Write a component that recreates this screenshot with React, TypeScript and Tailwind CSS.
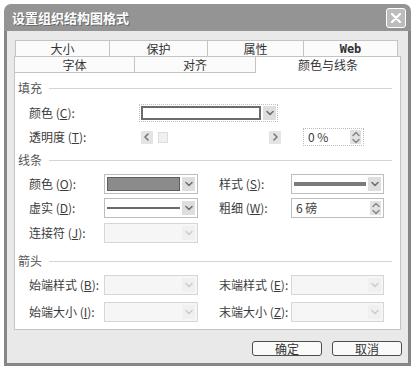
import type { ReactNode } from "react";

function Chevron({ dir = "down", color = "#6b6b6b" }: { dir?: "down" | "up" | "left" | "right"; color?: string }) {
    const d = {
        down: "M1 1.5L4 4.5L7 1.5",
        up: "M1 4.5L4 1.5L7 4.5",
        left: "M5 1L2 4L5 7",
        right: "M3 1L6 4L3 7",
    }[dir];
    const w = dir === "down" || dir === "up" ? 8 : 8;
    const h = dir === "down" || dir === "up" ? 6 : 8;
    return (
        <svg width={w} height={h} viewBox={`0 0 ${w} ${h}`} fill="none" aria-hidden="true">
            <path d={d} stroke={color} strokeWidth="1.6" strokeLinecap="round" strokeLinejoin="round" />
        </svg>
    );
}

function Label({ text, k, className = "" }: { text: string; k: string; className?: string }) {
    return (
        <span className={`shrink-0 text-[12px] leading-none text-[#3c3c3c] ${className}`}>
            {text} (<u>{k}</u>):
        </span>
    );
}

function ArrowBox({ dim }: { dim?: boolean }) {
    return (
        <div
            className={`flex w-[13px] shrink-0 items-center justify-center self-stretch ${
                dim ? "bg-[#f0f0f0]" : "bg-[#dedede]"
            }`}
        >
            <Chevron color={dim ? "#cdcdcd" : "#707070"} />
        </div>
    );
}

function Dropdown({ children, disabled, className = "" }: { children?: ReactNode; disabled?: boolean; className?: string }) {
    return (
        <div
            className={`flex h-[20px] gap-[2px] border p-[2px] ${
                disabled ? "border-[#d6d6d6] bg-[#f6f6f6]" : "border-[#bdbdbd] bg-white"
            } ${className}`}
        >
            <div className="flex flex-1 items-center">{children}</div>
            <ArrowBox dim={disabled} />
        </div>
    );
}

function SpinBox({ value, className = "" }: { value: string; className?: string }) {
    return (
        <div className={`flex h-[20px] items-center border border-[#bdbdbd] bg-white pl-[4px] pr-[2px] ${className}`}>
            <span className="flex-1 text-[12px] leading-none text-[#3c3c3c]">{value}</span>
            <div className="flex h-[14px] w-[11px] flex-col items-center justify-center gap-[1px] bg-[#e2e2e2]">
                <Chevron dir="up" color="#8a8a8a" />
                <Chevron dir="down" color="#8a8a8a" />
            </div>
        </div>
    );
}

function Section({ title, className = "" }: { title: string; className?: string }) {
    return (
        <div className={`flex h-[16px] items-center gap-[7px] pl-[3px] pr-[8px] ${className}`}>
            <span className="text-[12px] leading-none text-[#555]">{title}</span>
            <div className="h-px flex-1 bg-[#d4d4d4]" />
        </div>
    );
}

function Tab({ label, className = "", active }: { label: string; className?: string; active?: boolean }) {
    return (
        <div
            className={`flex items-center justify-center border-x border-t border-[#c4c4c4] text-[12px] leading-none text-[#333] ${
                active ? "bg-white" : "bg-[#fbfbfb]"
            } ${className}`}
        >
            {label}
        </div>
    );
}

export default function App() {
    return (
        <div className="h-[373px] w-[420px] bg-white pl-[4px] pt-[4px] font-['Noto_Sans_CJK_SC',sans-serif]">
            <div className="w-[407px]">
                {/* Title bar */}
                <div className="flex h-[27px] items-center justify-between rounded-t-[7px] bg-[#949494] pl-[8px] pr-[5px]">
                    <span className="text-[13px] font-bold leading-none text-white [text-shadow:1px_1px_0_#6a6a6a]">
                        设置组织结构图格式
                    </span>
                    <div className="flex h-[20px] w-[20px] items-center justify-center rounded-[3px] border border-white bg-[#bcbcbc]">
                        <svg width="10" height="10" viewBox="0 0 10 10" aria-hidden="true">
                            <path d="M1 1L9 9M9 1L1 9" stroke="white" strokeWidth="2.2" strokeLinecap="round" />
                        </svg>
                    </div>
                </div>

                {/* Body */}
                <div className="flex flex-col border-x-[3px] border-b-[3px] border-[#868686] bg-[#e9e9e9] pb-[7px] pt-[9px]">
                    {/* Tab rows */}
                    <div className="ml-[8px] flex h-[16px] w-[383px]">
                        <Tab label="大小" className="w-[95px]" />
                        <Tab label="保护" className="w-[98px] border-l-0" />
                        <Tab label="属性" className="w-[96px] border-l-0" />
                        <Tab label="Web" className="w-[94px] border-l-0 font-['DejaVu_Sans_Mono',monospace] text-[10px] font-bold" />
                    </div>
                    <div className="ml-[7px] flex h-[17px] w-[387px]">
                        <Tab label="字体" className="w-[121px] border-b" />
                        <Tab label="对齐" className="w-[121px] border-b border-l-0" />
                        <Tab label="颜色与线条" active className="flex-1 border-l-0" />
                    </div>

                    {/* Panel */}
                    <div className="ml-[7px] flex w-[387px] flex-col border-x border-b border-[#c4c4c4] bg-white pb-[7px] pt-[7px]">
                        <Section title="填充" />

                        <div className="mt-[8px] flex h-[18px] items-center pl-[14px]">
                            <Label text="颜色" k="C" className="w-[110px]" />
                            <div className="flex h-[18px] w-[139px] gap-[2px] border border-dotted border-[#c0c0c0] p-[1px]">
                                <div className="flex-1 border-[2px] border-[#6c6c6c] bg-white" />
                                <ArrowBox />
                            </div>
                        </div>

                        <div className="mt-[6px] flex h-[18px] items-center pl-[14px]">
                            <Label text="透明度" k="T" className="w-[112px]" />
                            <div className="flex w-[140px] items-center justify-between">
                                <div className="flex items-center gap-[5px]">
                                    <div className="flex h-[13px] w-[12px] items-center justify-center bg-[#e4e4e4]">
                                        <Chevron dir="left" color="#7a7a7a" />
                                    </div>
                                    <div className="h-[11px] w-[10px] border border-[#dcdcdc] bg-[#f0f0f0]" />
                                </div>
                                <div className="flex h-[13px] w-[12px] items-center justify-center bg-[#e4e4e4]">
                                    <Chevron dir="right" color="#7a7a7a" />
                                </div>
                            </div>
                            <SpinBox value="0 %" className="ml-[22px] !h-[18px] w-[61px] border-dotted" />
                        </div>

                        <Section title="线条" className="mt-[6px]" />

                        <div className="mt-[6px] flex h-[20px] items-center pl-[14px]">
                            <Label text="颜色" k="O" className="w-[75px]" />
                            <Dropdown className="w-[94px]">
                                <div className="h-full w-full border border-[#5e5e5e] bg-[#8b8b8b]" />
                            </Dropdown>
                            <Label text="样式" k="S" className="ml-[21px] w-[72px]" />
                            <Dropdown className="w-[93px]">
                                <div className="h-[4px] w-full bg-[#7a7a7a]" />
                            </Dropdown>
                        </div>

                        <div className="mt-[4px] flex h-[20px] items-center pl-[14px]">
                            <Label text="虚实" k="D" className="w-[75px]" />
                            <Dropdown className="w-[94px]">
                                <div className="h-[2px] w-full bg-[#6a6a6a]" />
                            </Dropdown>
                            <Label text="粗细" k="W" className="ml-[21px] w-[72px]" />
                            <SpinBox value="6 磅" className="w-[93px]" />
                        </div>

                        <div className="mt-[5px] flex h-[20px] items-center pl-[14px]">
                            <Label text="连接符" k="J" className="w-[75px]" />
                            <Dropdown disabled className="w-[94px]" />
                        </div>

                        <Section title="箭头" className="mt-[10px]" />

                        <div className="mt-[6px] flex h-[20px] items-center pl-[14px]">
                            <Label text="始端样式" k="B" className="w-[75px]" />
                            <Dropdown disabled className="w-[94px]" />
                            <Label text="末端样式" k="E" className="ml-[21px] w-[72px]" />
                            <Dropdown disabled className="w-[93px]" />
                        </div>

                        <div className="mt-[7px] flex h-[20px] items-center pl-[14px]">
                            <Label text="始端大小" k="I" className="w-[75px]" />
                            <Dropdown disabled className="w-[94px]" />
                            <Label text="末端大小" k="Z" className="ml-[21px] w-[72px]" />
                            <Dropdown disabled className="w-[93px]" />
                        </div>
                    </div>

                    {/* Buttons */}
                    <div className="mt-[11px] flex justify-end gap-[10px] pr-[6px]">
                        <button className="flex h-[15px] w-[70px] items-center justify-center rounded-[3px] border border-[#4c4c4c] bg-[#fafafa] text-[12px] leading-none text-[#333]">
                            确定
                        </button>
                        <button className="flex h-[15px] w-[70px] items-center justify-center rounded-[3px] border border-[#4c4c4c] bg-[#fafafa] text-[12px] leading-none text-[#333]">
                            取消
                        </button>
                    </div>
                </div>
            </div>
        </div>
    );
}
